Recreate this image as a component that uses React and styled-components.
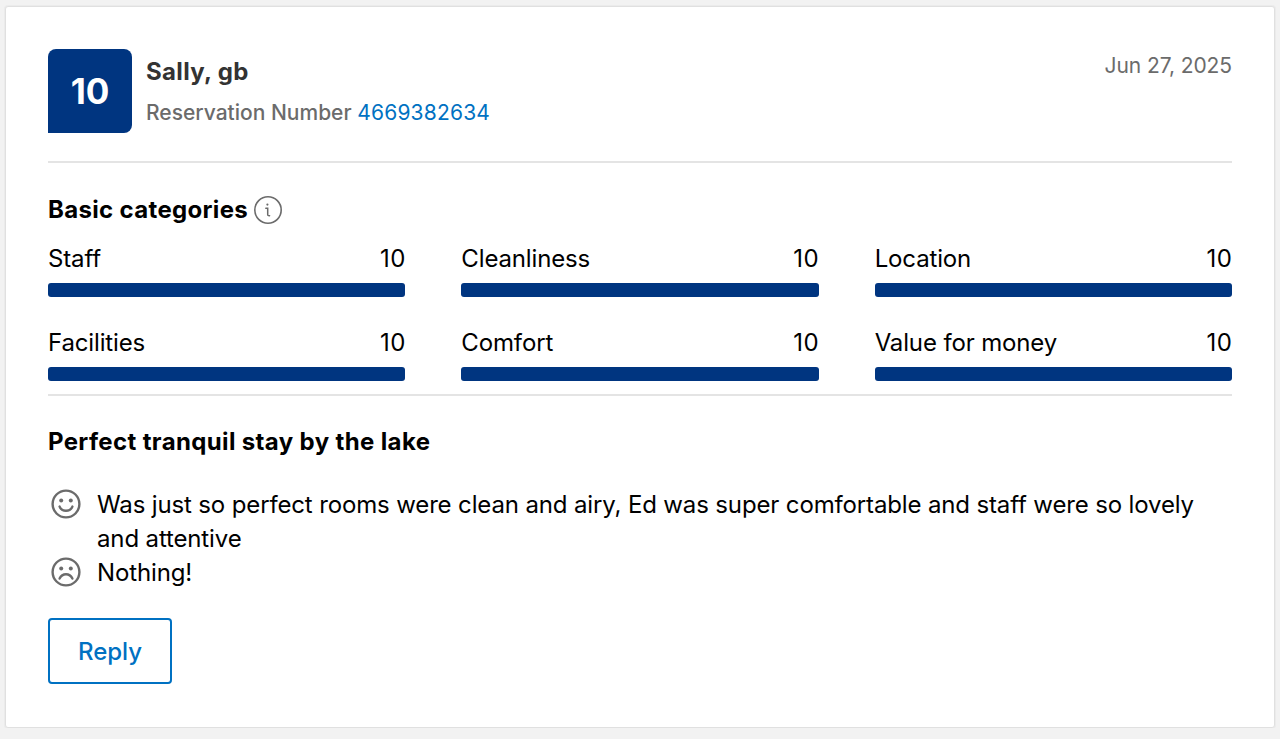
import React from "react";
import styled, { createGlobalStyle } from "styled-components";

const categories = [
  { name: "Staff", score: 10 },
  { name: "Cleanliness", score: 10 },
  { name: "Location", score: 10 },
  { name: "Facilities", score: 10 },
  { name: "Comfort", score: 10 },
  { name: "Value for money", score: 10 },
];

function InfoIcon() {
  return (
    <svg width="30" height="30" viewBox="0 0 30 30" fill="none" stroke="#6b6b6b">
      <circle cx="15" cy="15" r="13.2" strokeWidth="1.6" />
      <circle cx="14.4" cy="9.6" r="1.1" fill="#6b6b6b" stroke="none" />
      <path d="M12.8 13.2h1.9v6.2c0 1 .6 1.5 1.9 1.3" strokeWidth="1.5" strokeLinecap="round" />
    </svg>
  );
}

function Smiley({ sad }) {
  return (
    <svg width="32" height="32" viewBox="0 0 32 32" fill="none" stroke="#6b6b6b">
      <circle cx="16" cy="16" r="13.4" strokeWidth="2.4" />
      <circle cx="11.2" cy="12.4" r="2" fill="#6b6b6b" stroke="none" />
      <circle cx="20.8" cy="12.4" r="2" fill="#6b6b6b" stroke="none" />
      {sad ? (
        <path d="M9.6 22.6c1.4-3 3.6-4.4 6.4-4.4s5 1.4 6.4 4.4" strokeWidth="2.4" strokeLinecap="round" />
      ) : (
        <path d="M9.6 18.6c1.2 2.8 3.4 4.2 6.4 4.2s5.2-1.4 6.4-4.2" strokeWidth="2.4" strokeLinecap="round" />
      )}
    </svg>
  );
}

export default function App() {
  return (
    <>
      <GlobalStyle />
      <Card>
        <Header>
          <Guest>
            <ScoreBadge>10</ScoreBadge>
            <GuestInfo>
              <GuestName>Sally, gb</GuestName>
              <Reservation>
                Reservation Number <ReservationLink>4669382634</ReservationLink>
              </Reservation>
            </GuestInfo>
          </Guest>
          <ReviewDate>Jun 27, 2025</ReviewDate>
        </Header>

        <Categories>
          <SectionTitle>
            Basic categories
            <InfoIcon />
          </SectionTitle>
          <CategoryGrid>
            {categories.map((c) => (
              <Category key={c.name}>
                <CategoryRow>
                  <span>{c.name}</span>
                  <Score>{c.score}</Score>
                </CategoryRow>
                <Track>
                  <Fill style={{ width: `${c.score * 10}%` }} />
                </Track>
              </Category>
            ))}
          </CategoryGrid>
        </Categories>

        <Review>
          <ReviewTitle>Perfect tranquil stay by the lake</ReviewTitle>
          <Comments>
            <Comment>
              <Smiley />
              <p>
                Was just so perfect rooms were clean and airy, Ed was super comfortable and staff were so lovely and
                attentive
              </p>
            </Comment>
            <Comment>
              <Smiley sad />
              <p>Nothing!</p>
            </Comment>
          </Comments>
          <ReplyButton>Reply</ReplyButton>
        </Review>
      </Card>
    </>
  );
}

const GlobalStyle = createGlobalStyle`
  body {
    margin: 0;
    background-color: #f2f2f2;
    font-family: Inter, "Liberation Sans", sans-serif;
    color: #000;
  }
`;
const Card = styled.div`
  box-sizing: border-box;
  width: 1270px;
  height: 722px;
  margin: 6px 0 0 5px;
  padding: 42px 42px 0 42px;
  background-color: #fff;
  border: 1px solid #e0e0e0;
  border-radius: 3px;
  box-shadow: 0 0 0 1px #ebebeb;
`;
const Header = styled.div`
  display: flex;
  justify-content: space-between;
  align-items: flex-start;
  padding-bottom: 28px;
  border-bottom: 2px solid #e4e4e4;
`;
const Guest = styled.div`
  display: flex;
  gap: 14px;
`;
const ScoreBadge = styled.div`
  display: flex;
  align-items: center;
  justify-content: center;
  width: 84px;
  height: 84px;
  background-color: #003580;
  border-radius: 8px 8px 8px 0;
  color: #fff;
  font-size: 35px;
  font-weight: 700;
`;
const GuestInfo = styled.div`
  display: flex;
  flex-direction: column;
`;
const GuestName = styled.div`
  margin-top: 5px;
  color: #333;
  font-size: 24px;
  font-weight: 700;
  letter-spacing: 0.33px;
  line-height: 36px;
`;
const Reservation = styled.div`
  margin-top: 7px;
  color: #6b6b6b;
  font-size: 21px;
  font-weight: 500;
  line-height: 32px;
`;
const ReservationLink = styled.a`
  color: #0071c2;
  font-weight: 400;
  letter-spacing: 0.2px;
`;
const ReviewDate = styled.div`
  margin-top: 1px;
  color: #6b6b6b;
  font-size: 21px;
  letter-spacing: -0.08px;
  line-height: 32px;
`;
const Categories = styled.div`
  padding: 30px 0 13px 0;
  border-bottom: 2px solid #e4e4e4;
`;
const SectionTitle = styled.h3`
  display: flex;
  align-items: center;
  gap: 5px;
  margin: 0 0 15px 0;
  font-size: 24px;
  font-weight: 700;
  letter-spacing: 0.33px;
  line-height: 34px;
`;
const CategoryGrid = styled.div`
  display: grid;
  grid-template-columns: repeat(3, 1fr);
  column-gap: 56px;
  row-gap: 29px;
`;
const Category = styled.div``;
const CategoryRow = styled.div`
  display: flex;
  justify-content: space-between;
  font-size: 24px;
  letter-spacing: -0.14px;
  line-height: 34px;
  margin-bottom: 7px;
`;
const Score = styled.span`
  letter-spacing: 0.5px;
  margin-right: -0.5px;
`;
const Track = styled.div`
  height: 14px;
  background-color: #e4e4e4;
  border-radius: 3px;
  overflow: hidden;
`;
const Fill = styled.div`
  height: 100%;
  background-color: #003580;
`;
const Review = styled.div`
  padding-top: 29px;
`;
const ReviewTitle = styled.h4`
  margin: 0 0 29px 0;
  font-size: 24px;
  font-weight: 700;
  letter-spacing: 0.36px;
  line-height: 34px;
`;
const Comments = styled.div`
  display: flex;
  flex-direction: column;
`;
const Comment = styled.div`
  display: flex;
  gap: 15.5px;
  align-items: flex-start;
  font-size: 24px;
  letter-spacing: -0.14px;
  line-height: 34px;
  svg {
    flex-shrink: 0;
    margin: 0 0 0 1.5px;
  }
  p {
    margin: 0;
  }
`;
const ReplyButton = styled.button`
  display: block;
  box-sizing: border-box;
  width: 124px;
  height: 66px;
  margin-top: 28px;
  background-color: #fff;
  border: 2px solid #0071c2;
  border-radius: 4px;
  color: #0071c2;
  font-family: inherit;
  font-size: 24px;
  font-weight: 500;
`;
